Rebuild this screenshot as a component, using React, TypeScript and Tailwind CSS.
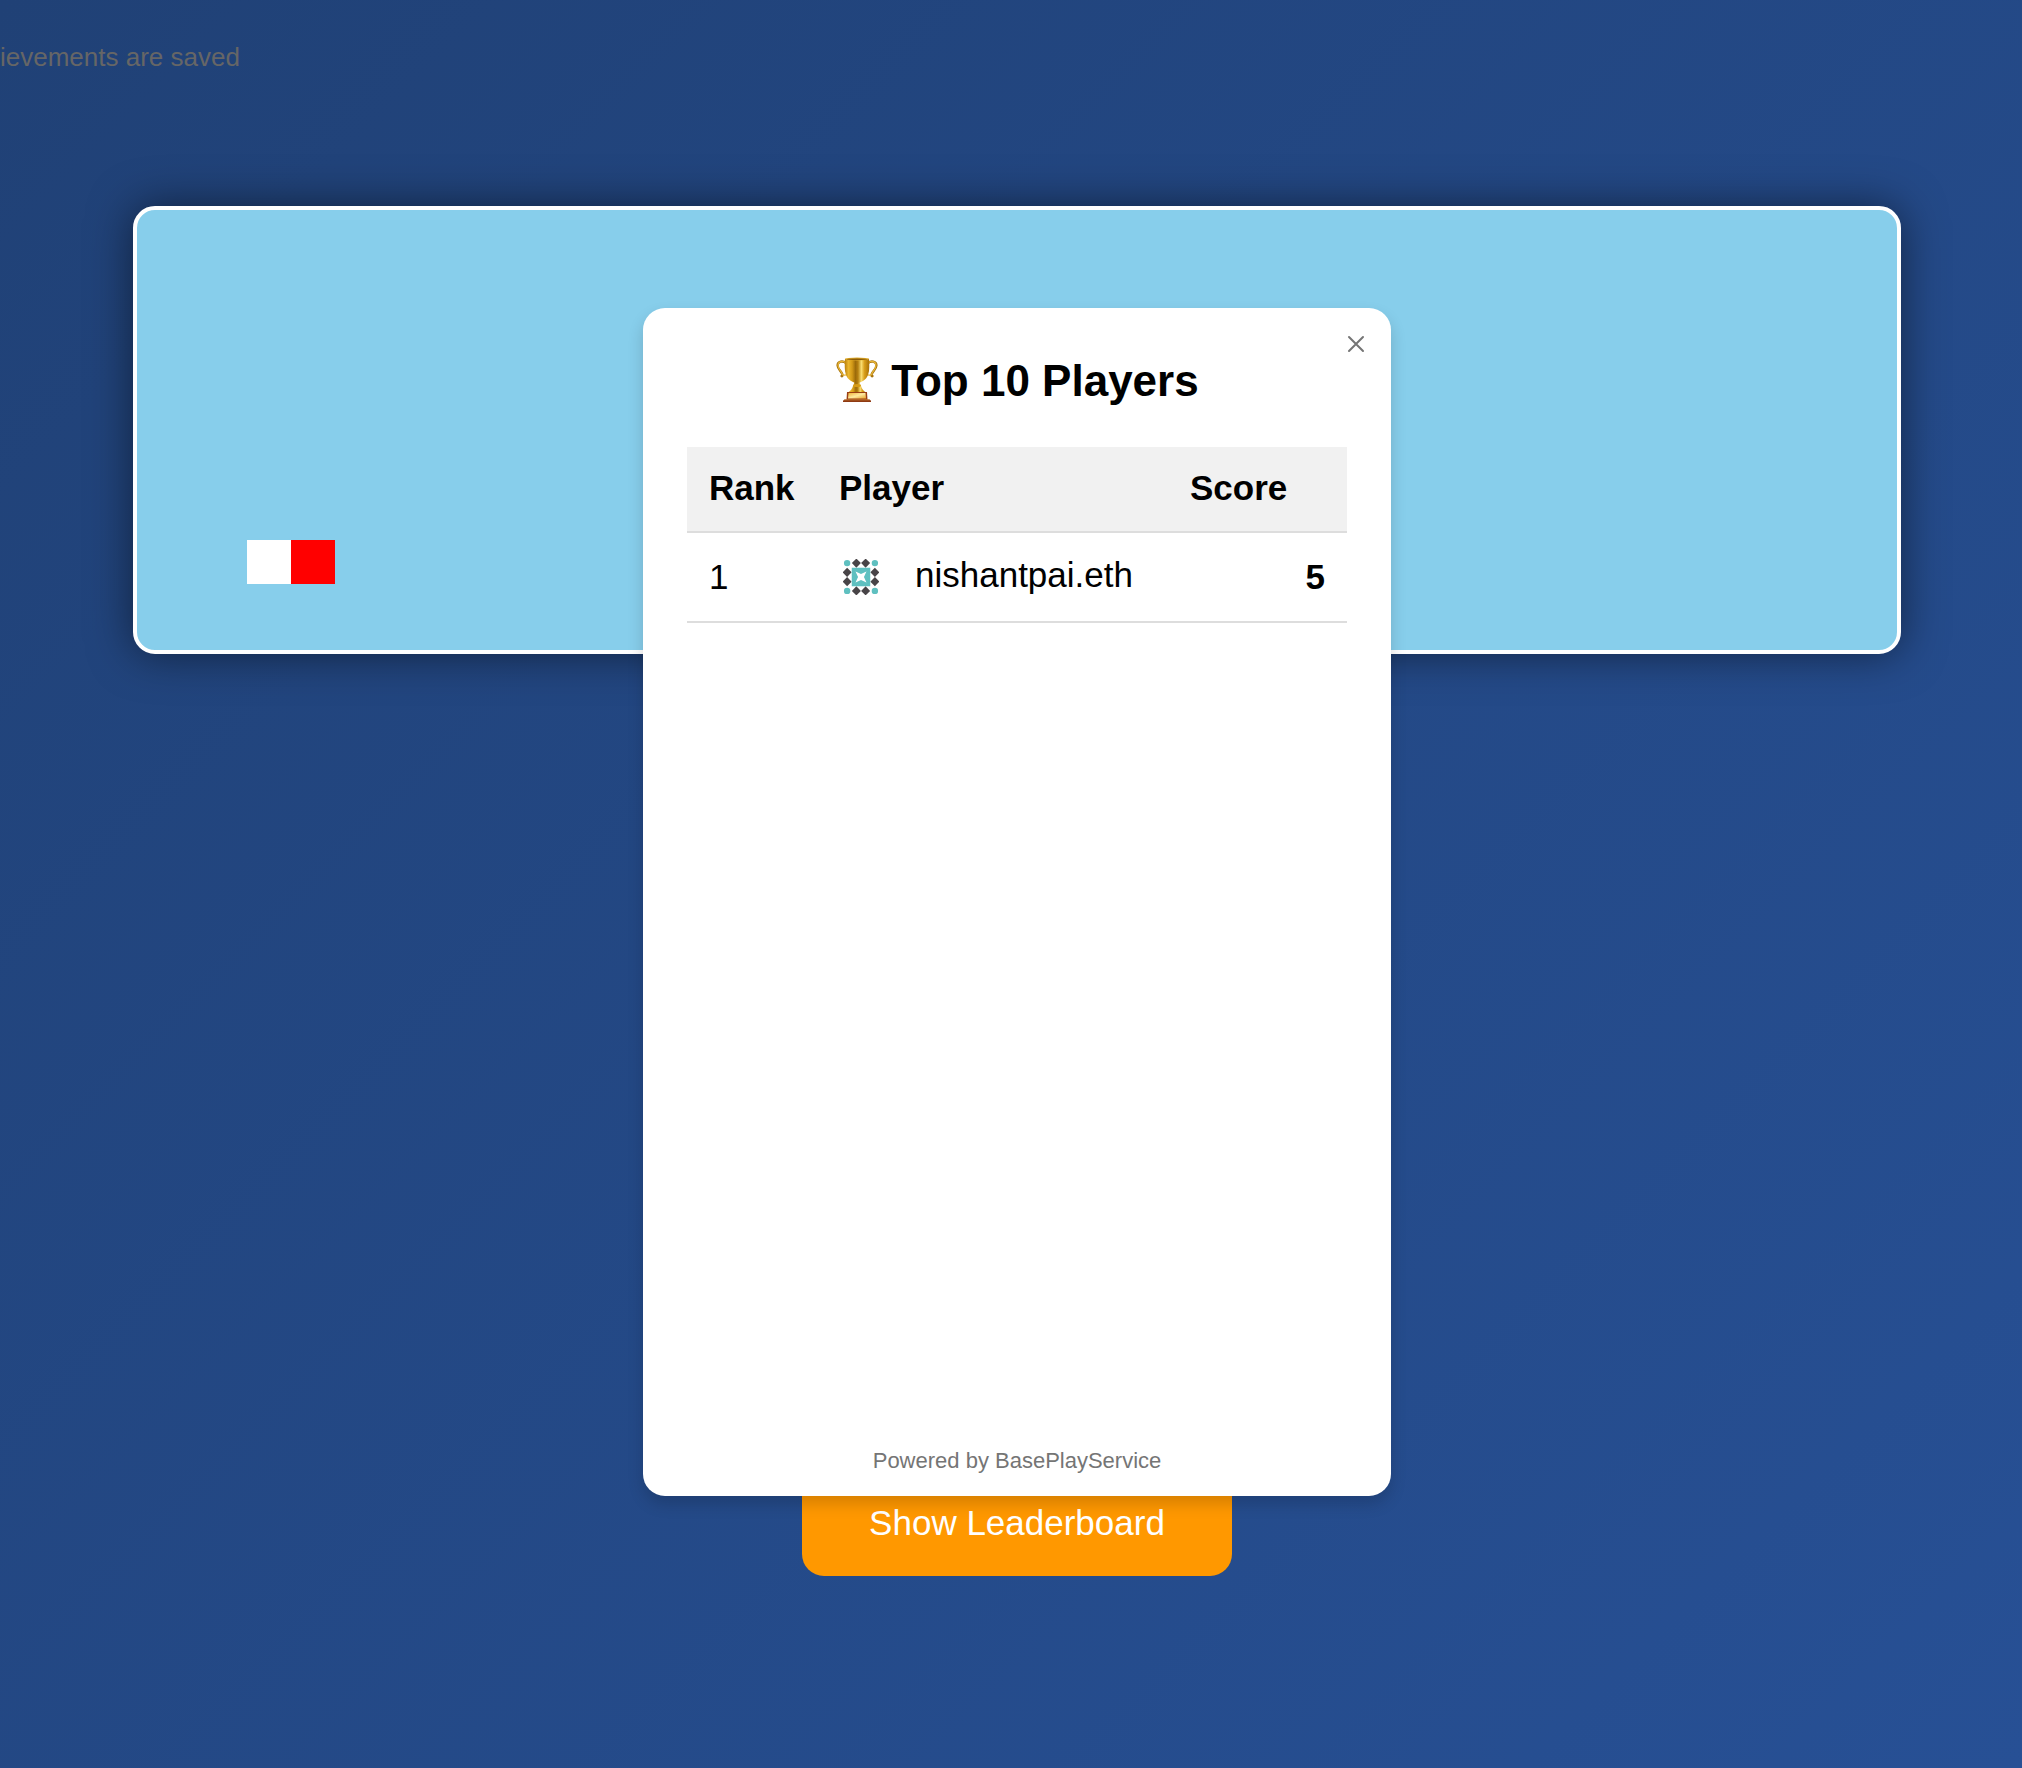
import React from "react";

const players = [{ rank: 1, name: "nishantpai.eth", score: 5 }];

function Trophy() {
  return (
    <svg viewBox="0 0 44 48" className="h-[48px] w-[44px] shrink-0" aria-hidden="true">
      <defs>
        <linearGradient id="cup" x1="0" x2="1" y1="0" y2="0">
          <stop offset="0" stopColor="#b9800c" />
          <stop offset="0.15" stopColor="#eab62e" />
          <stop offset="0.3" stopColor="#d39a18" />
          <stop offset="0.44" stopColor="#9c6b0a" />
          <stop offset="0.54" stopColor="#b58010" />
          <stop offset="0.68" stopColor="#f9dc70" />
          <stop offset="0.8" stopColor="#d99f1b" />
          <stop offset="1" stopColor="#a87006" />
        </linearGradient>
        <linearGradient id="plate" x1="0" x2="1" y1="0" y2="1">
          <stop offset="0" stopColor="#f0b43c" />
          <stop offset="0.5" stopColor="#fde9a0" />
          <stop offset="1" stopColor="#e9a630" />
        </linearGradient>
      </defs>
      <path
        d="M11 6C8 3.500 2.500 4 2.600 8.500C2.800 12.500 6.500 14 7.500 17.500C7.800 19 7 19.500 6.500 19M33 6C36 3.500 41.500 4 41.400 8.500C41.200 12.500 37.500 14 36.500 17.500C36.200 19 37 19.500 37.500 19"
        fill="none"
        stroke="#a87410"
        strokeWidth="2.400"
        strokeLinecap="round"
      />
      <path
        d="M11 6C8 3.500 3 4 3 8.500C3.200 12.500 6.500 14 7.500 17.500M33 6C36 3.500 41 4 41 8.500C40.800 12.500 37.500 14 36.500 17.500M7.500 17.500C9.500 19 11.500 18 13 17M36.500 17.500C34.500 19 32.500 18 31 17"
        fill="none"
        stroke="#e8b636"
        strokeWidth="1.200"
        strokeLinecap="round"
      />
      <path d="M19 24h6c-.5 2 0 3.500 1 5c.8 3 2.500 5 5 6.500h-18c2.500-1.500 4.200-3.500 5-6.500c1-1.500 1.500-3 1-5z" fill="url(#cup)" />
      <ellipse cx="22" cy="28.500" rx="4" ry="1.500" fill="#d79b16" />
      <path d="M10 1.800C9.500 10 9.500 15.500 12 20C14.500 24 18.500 25.500 22 26C25.500 25.500 29.500 24 32 20C34.500 15.500 34.500 10 34 1.800z" fill="url(#cup)" />
      <ellipse cx="22" cy="2" rx="12" ry="1.500" fill="#e0ac2b" />
      <ellipse cx="22" cy="2.200" rx="10.500" ry="0.800" fill="#8c5c08" />
      <path d="M12 35h20l.5 8h-21z" fill="#9a3f14" />
      <path d="M13.500 36h17l.5 5.500h-18z" fill="url(#plate)" />
      <path d="M9.500 42.500h25l1.500 1.200v1.300h-28v-1.300z" fill="#8f3a12" />
      <path d="M9.500 42.500h25l.6.700H8.900z" fill="#d08a3a" />
    </svg>
  );
}

function Identicon() {
  const diamonds = [
    [13, 4], [22, 4], [13, 31], [22, 31],
    [4, 13], [4, 22], [31, 13], [31, 22],
  ];
  const dots = [[4, 4], [31, 4], [4, 31], [31, 31]];
  return (
    <svg viewBox="0 0 35 35" className="mx-1 size-9 shrink-0" role="img" aria-label="Player avatar">
      {diamonds.map(([x, y]) => (
        <path
          key={`${x}-${y}`}
          d={`M${x} ${y - 4.4}l4.400 4.400l-4.400 4.400l-4.400-4.400z`}
          fill="#484447"
        />
      ))}
      {dots.map(([x, y]) => (
        <circle key={`${x}-${y}`} cx={x} cy={y} r="3.100" fill="#5fc0c0" />
      ))}
      <path d="M8.500 8.500h18v18h-18z" fill="#5fc0c0" />
      <path
        d="M12.200 12.200L17.500 14.600L22.800 12.200L20.400 17.500L22.800 22.800L17.500 20.400L12.200 22.800L14.600 17.500z"
        fill="#fff"
      />
    </svg>
  );
}

function Leaderboard() {
  return (
    <section
      role="dialog"
      aria-labelledby="board-title"
      className="relative flex min-h-[1188px] w-[748px] flex-col rounded-[22px] bg-white px-[44px] pt-[47px] pb-[22px] text-black shadow-[0_8px_16px_rgba(0,0,0,0.16)]"
    >
      <button type="button" aria-label="Close" className="absolute top-[22px] right-[21px] p-[5px] text-[#757575]">
        <svg viewBox="0 0 18 18" className="size-[18px]" fill="none" stroke="currentColor" strokeWidth="2">
          <path d="M2 2l14 14M16 2L2 16" strokeLinecap="round" />
        </svg>
      </button>
      <h2 id="board-title" className="mb-10 flex items-center justify-center gap-3 text-[44px] leading-[52px] font-bold">
        <Trophy />
        Top 10 Players
      </h2>
      <table className="w-full table-fixed border-collapse text-left text-[35px] leading-[40px]">
        <colgroup>
          <col className="w-[130px]" />
          <col />
          <col className="w-[179px]" />
        </colgroup>
        <thead>
          <tr className="h-[85px] border-b-2 border-[#dddddd] bg-[#f1f1f1]">
            <th className="px-[22px] pb-0.5">Rank</th>
            <th className="px-[22px] pb-0.5">Player</th>
            <th className="px-[22px] pb-0.5">Score</th>
          </tr>
        </thead>
        <tbody>
          {players.map((p) => (
            <tr key={p.rank} className="h-[90px] border-b-2 border-[#dddddd]">
              <td className="px-[22px]">{p.rank}</td>
              <td className="pl-[22px]">
                <div className="flex items-center gap-8">
                  <Identicon />
                  <span className="pb-1">{p.name}</span>
                </div>
              </td>
              <td className="px-[22px] text-right font-bold">{p.score}</td>
            </tr>
          ))}
        </tbody>
      </table>
      <p className="mt-auto text-center text-[22px] leading-[26px] text-[#757575]">Powered by BasePlayService</p>
    </section>
  );
}

export default function App() {
  return (
    <div className="relative flex min-h-screen flex-col overflow-hidden bg-linear-[135deg,#204176,#275095] pl-3 font-['Liberation_Sans',Arial,sans-serif]">
      <p className="-ml-3 pt-[42px] text-[26px] leading-[30px] text-[#666666]">ievements are saved</p>
      <main className="flex flex-1 flex-col px-[121px] pt-[134px]">
        <div className="flex h-[448px] items-end rounded-[22px] border-4 border-white bg-[#87ceeb] pb-[66px] pl-[110px] shadow-[0_0_44px_rgba(0,0,0,0.5)]">
          <div className="size-[44px] bg-white" />
          <div className="size-[44px] bg-[#ff0000]" />
        </div>
        <button
          type="button"
          className="mt-[818px] self-center rounded-[22px] bg-[#ff9800] px-[67px] pt-[31px] pb-[33px] text-[35px] leading-[40px] text-white"
        >
          Show Leaderboard
        </button>
      </main>
      <div className="absolute inset-0 flex items-start justify-center pt-[308px] pl-3">
        <Leaderboard />
      </div>
    </div>
  );
}
